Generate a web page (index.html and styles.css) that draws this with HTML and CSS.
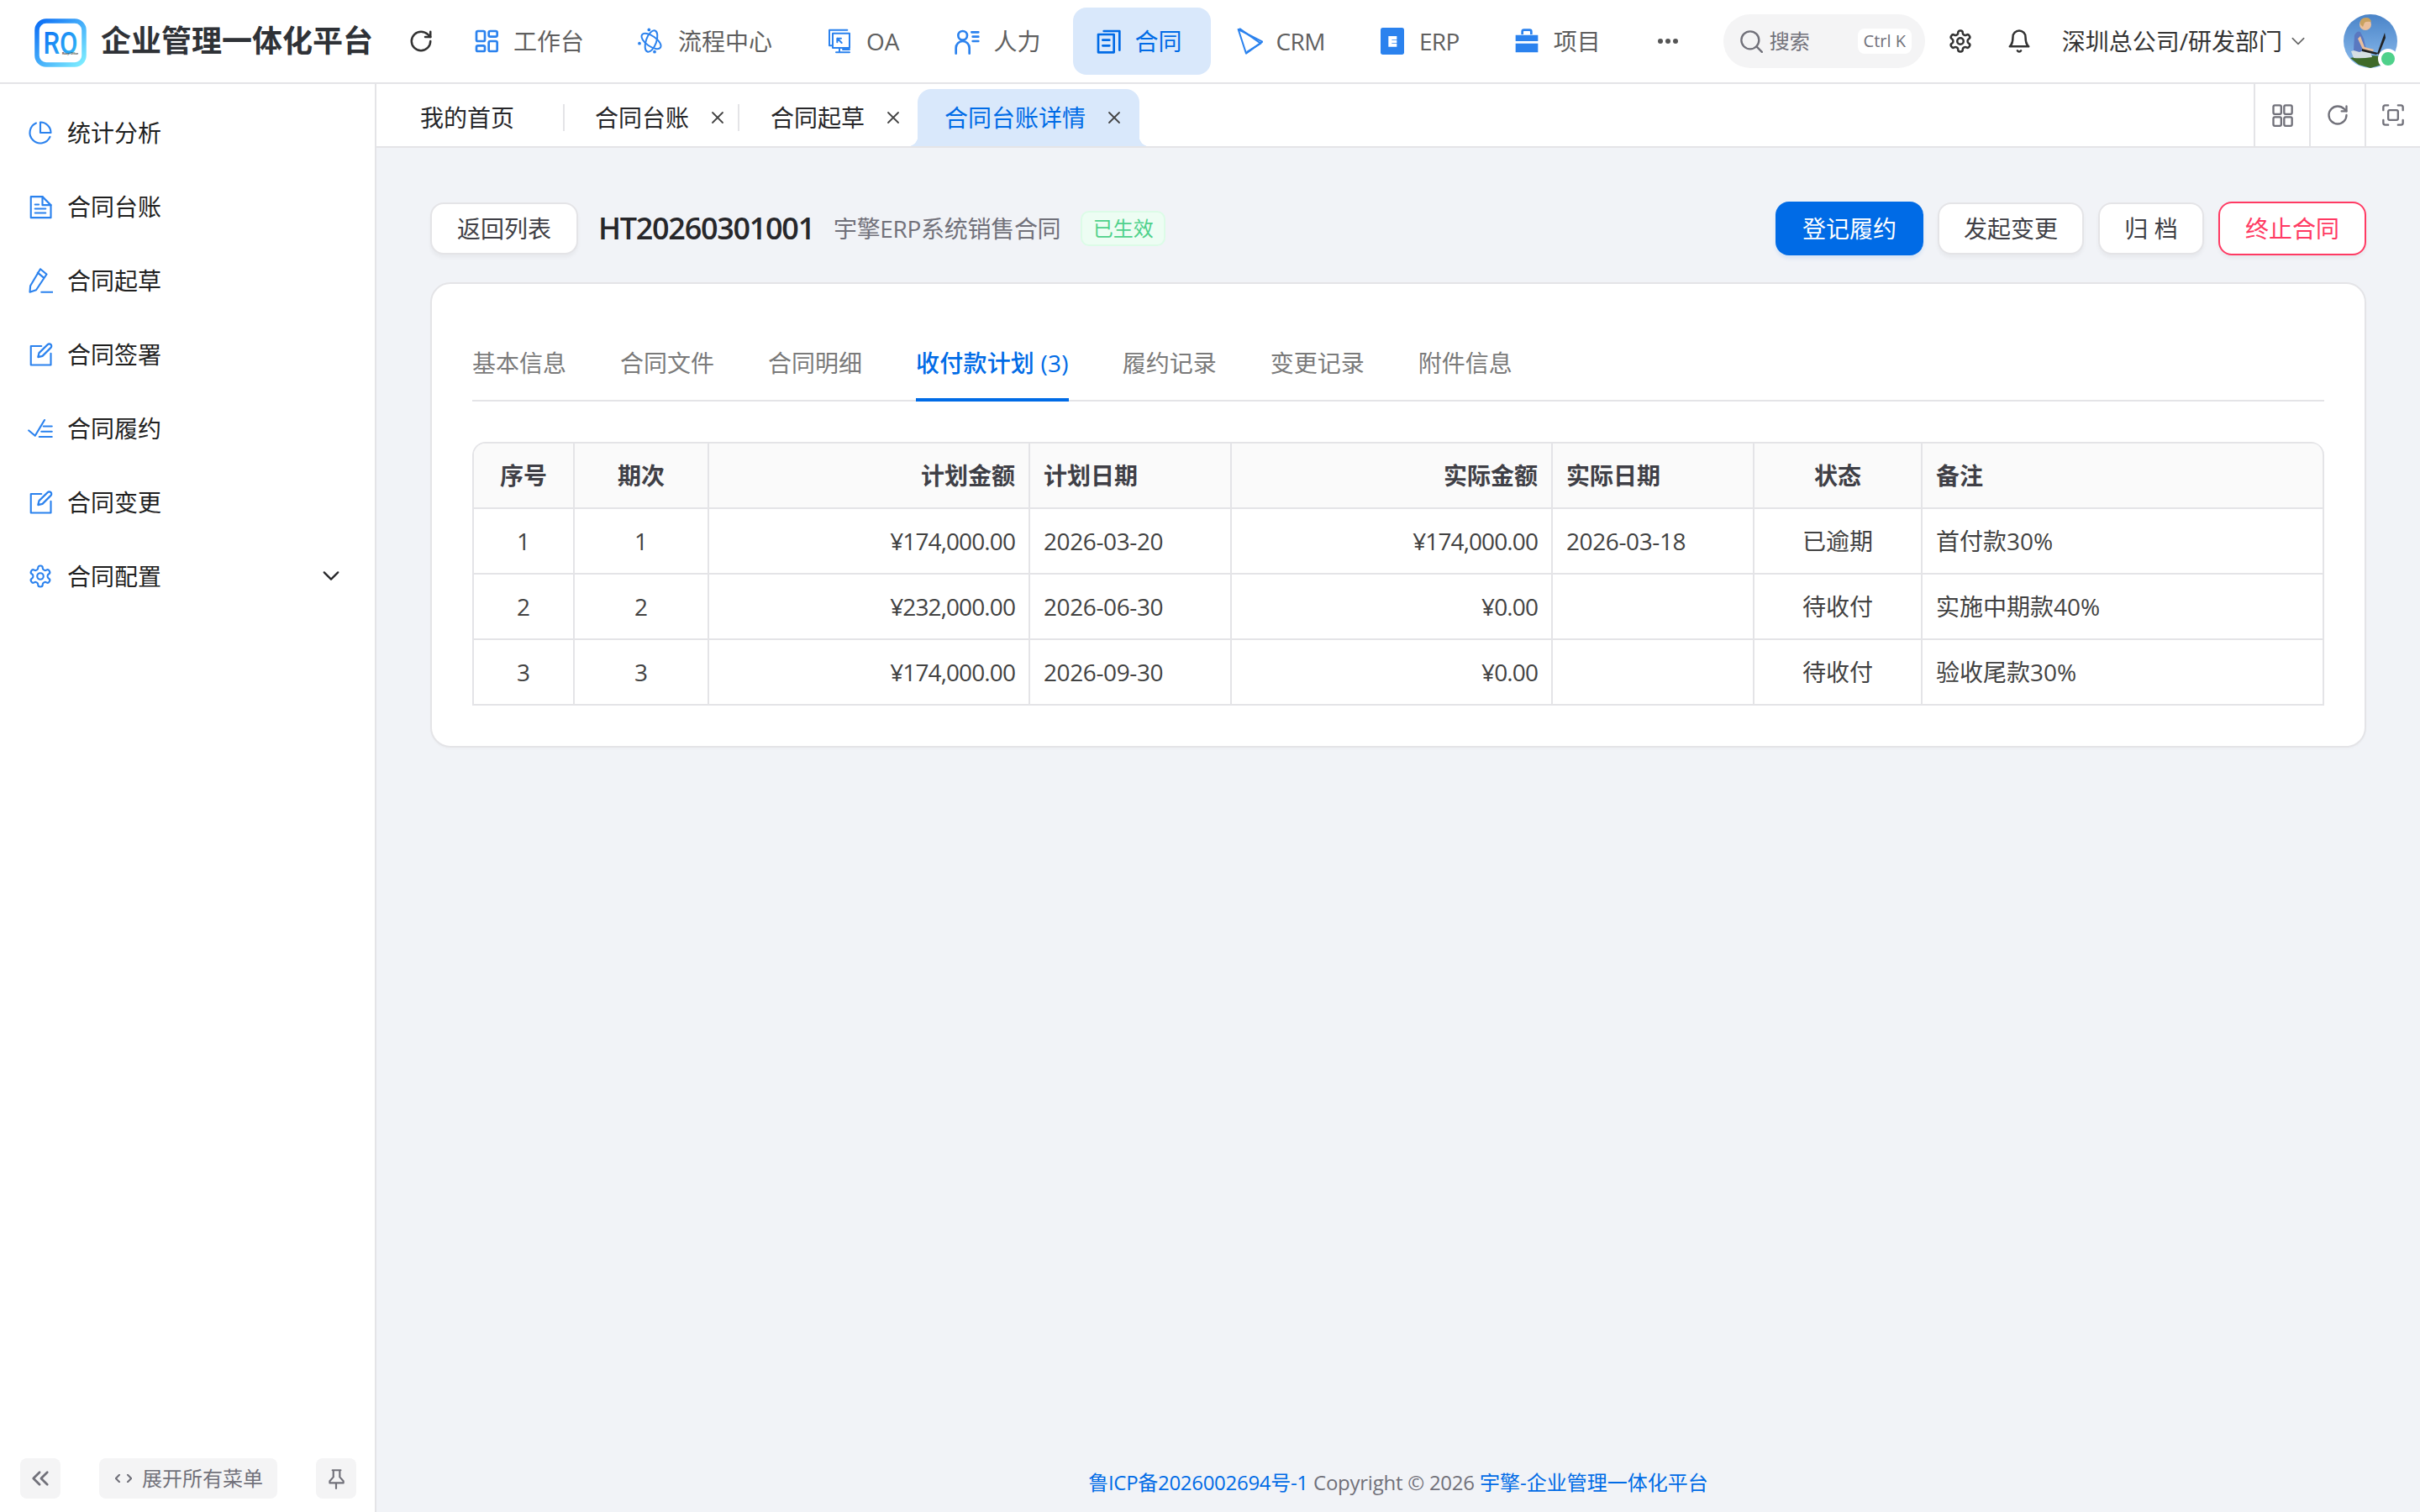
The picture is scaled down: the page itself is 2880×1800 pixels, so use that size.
FILE: index.html
```html
<!DOCTYPE html>
<html lang="zh-CN">
<head>
<meta charset="utf-8">
<title>合同台账详情</title>
<link rel="stylesheet" href="styles.css">
</head>
<body>
<header class="topbar">
  <svg class="logo" viewBox="0 0 62 58">
    <defs><linearGradient id="lg" x1="0" y1="0" x2="1" y2="1"><stop offset="0" stop-color="#0a6cf5"/><stop offset="1" stop-color="#7fefff"/></linearGradient>
    <linearGradient id="lt" x1="0" y1="0" x2="1" y2="1"><stop offset="0" stop-color="#0a6cf5"/><stop offset="1" stop-color="#38c0f5"/></linearGradient></defs>
    <rect x="3" y="3" width="56" height="52" rx="11" fill="#fff" stroke="url(#lg)" stroke-width="5.5"/>
    <text x="10.5" y="41.5" class="logo-ro" fill="url(#lt)" textLength="41" lengthAdjust="spacingAndGlyphs">RO</text>
    <text x="33" y="42.8" class="logo-sub" textLength="19" lengthAdjust="spacingAndGlyphs">Ruoyi Office</text>
  </svg>
  <h1 class="brand">企业管理一体化平台</h1>
  <svg class="ico reload" viewBox="0 0 24 24"><path d="M21 12a9 9 0 1 1-9-9c2.5 0 4.9 1 6.7 2.7L21 8"/><path d="M21 3v5h-5"/></svg>
  <nav class="topnav">
    <a class="navitem"><svg class="ico navico" viewBox="0 0 24 24"><rect x="3" y="3" width="7.5" height="9" rx="1.4"/><rect x="14" y="3" width="7.5" height="5" rx="1.4"/><rect x="14" y="12" width="7.5" height="9" rx="1.4"/><rect x="3" y="16" width="7.5" height="5" rx="1.4"/></svg><span>工作台</span></a>
    <a class="navitem"><svg class="ico navico thin" viewBox="0 0 24 24"><ellipse cx="12" cy="12" rx="10" ry="4.6" transform="rotate(35 12 12)"/><ellipse cx="12" cy="12" rx="10" ry="4.6" transform="rotate(-70 12 12)"/><circle class="dot" cx="10" cy="1.8" r="1.4"/><circle class="dot" cx="1.5" cy="14" r="1.4"/><circle class="dot" cx="15" cy="21.5" r="1.4"/></svg><span>流程中心</span></a>
    <a class="navitem"><svg class="ico navico thin" viewBox="0 0 24 24"><path d="M3 2h16M3 2v14h3"/><path d="M6 5h15v13H6zM10 9.500l4 4M10 13V9.500h3.500"/><path d="M9 22h6M12 18v4M15 19.500h6M15 22h6"/></svg><span>OA</span></a>
    <a class="navitem"><svg class="ico navico" viewBox="0 0 24 24"><circle cx="8" cy="7" r="4"/><path d="M2 23v-5a6 6 0 0 1 12 0v5M16 4h6M17 8h5M17 12h5"/></svg><span>人力</span></a>
    <a class="navitem active"><svg class="ico navico strong" viewBox="0 0 24 24"><path d="M8 3h14v17"/><rect x="3" y="6" width="14" height="16"/><path d="M7 11h6M7 16h6"/></svg><span>合同</span></a>
    <a class="navitem"><svg class="ico navico thin" viewBox="0 0 24 24"><path d="M2 1.500 23.500 12.500 9 23z"/><path d="M3.500 1 22 14 10 21.500"/></svg><span class="latin">CRM</span></a>
    <a class="navitem"><svg class="navico" viewBox="0 0 24 24"><rect x="1.500" width="21" height="24" rx="2" fill="#2b82ee"/><path d="M8.500 7.500h7.500v3h-4.500v.6h4.500v2.500h-4.500v.7h4.500v2.700H8.500z" fill="#fff"/></svg><span class="latin">ERP</span></a>
    <a class="navitem"><svg class="navico" viewBox="0 0 24 24"><path d="M8 6V3.500A1.500 1.500 0 0 1 9.500 2h5A1.500 1.500 0 0 1 16 3.500V6" fill="none" stroke="#2b82ee" stroke-width="2"/><path d="M2 6.500h20V12H2zM2 14h20v8H2z" fill="#2b82ee"/></svg><span>项目</span></a>
    <span class="more"><i></i><i></i><i></i></span>
  </nav>
  <div class="search">
    <svg class="ico gray" viewBox="0 0 24 24"><circle cx="11" cy="11" r="9"/><path d="m23 23-5.500-5.500"/></svg>
    <span class="search-label">搜索</span>
    <kbd class="kbd">Ctrl K</kbd>
  </div>
  <svg class="ico gear" viewBox="0 0 24 24"><path d="M12.220 2h-.44a2 2 0 0 0-2 2v.18a2 2 0 0 1-1 1.730l-.43.25a2 2 0 0 1-2 0l-.15-.08a2 2 0 0 0-2.730.73l-.22.38a2 2 0 0 0 .73 2.730l.15.1a2 2 0 0 1 1 1.720v.51a2 2 0 0 1-1 1.740l-.15.09a2 2 0 0 0-.73 2.730l.22.38a2 2 0 0 0 2.730.73l.15-.08a2 2 0 0 1 2 0l.43.25a2 2 0 0 1 1 1.730V20a2 2 0 0 0 2 2h.44a2 2 0 0 0 2-2v-.18a2 2 0 0 1 1-1.730l.43-.25a2 2 0 0 1 2 0l.15.08a2 2 0 0 0 2.730-.73l.22-.39a2 2 0 0 0-.73-2.730l-.15-.08a2 2 0 0 1-1-1.740v-.5a2 2 0 0 1 1-1.740l.15-.09a2 2 0 0 0 .73-2.730l-.22-.38a2 2 0 0 0-2.730-.73l-.15.08a2 2 0 0 1-2 0l-.43-.25a2 2 0 0 1-1-1.730V4a2 2 0 0 0-2-2z"/><circle cx="12" cy="12" r="3"/></svg>
  <svg class="ico bell" viewBox="0 0 24 24"><path d="M6 8a6 6 0 0 1 12 0c0 7 3 9 3 9H3s3-2 3-9"/><path d="M10.300 21a1.900 1.900 0 0 0 3.400 0"/></svg>
  <span class="org">深圳总公司/研发部门</span>
  <svg class="ico org-chev" viewBox="0 0 24 24"><path d="m4 8 8 8 8-8"/></svg>
  <div class="avatar">
    <svg viewBox="0 0 64 64">
      <defs><linearGradient id="sky" x1="0" y1="0" x2="0" y2="1"><stop offset="0" stop-color="#4a84c8"/><stop offset="1" stop-color="#8cbcee"/></linearGradient></defs>
      <circle cx="32" cy="32" r="32" fill="url(#sky)"/>
      <path d="M8 52q24-6 48 0L46 60 32 64 18 60z" fill="#3f6a2a"/>
      <path d="M9 44q10-4 22-2l3 9q-12 2-22 1z" fill="#d6dfe3"/>
      <path d="M12 43 13 25q3-6 7-4l4 8 3 13-8 3z" fill="#5a78c0"/>
      <circle cx="26" cy="12" r="7" fill="#eabf9c"/>
      <path d="M20 12q-1-8 7-8 5 0 6 5-6-1-8 1l-2 5z" fill="#c9a15f"/>
      <path d="M20 26l5 13 11 3-1 2-12-2-6-13z" fill="#eabf9c"/>
      <path d="M22 41l19 5-2 2-17-4z" fill="#222"/>
      <path d="M49 22 40 47l2 1 8-20z" fill="#222"/>
    </svg>
    <span class="presence"></span>
  </div>
</header>

<div class="body">
  <aside class="sidebar">
    <ul class="sidemenu">
      <li class="sideitem"><svg class="ico sideico" viewBox="0 0 24 24"><path d="M21.200 15.900A10 10 0 1 1 8 2.800"/><path d="M12 2v10h10A10 10 0 0 0 12 2z"/></svg>统计分析</li>
      <li class="sideitem"><svg class="ico sideico" viewBox="0 0 24 24"><path d="M14 2.500H3v20h19V10.500z"/><path d="M14 2.500v8h8M7 10h3.500M7 14h10M7 18h10"/></svg>合同台账</li>
      <li class="sideitem"><svg class="ico sideico" viewBox="0 0 24 24"><path d="M2 23l.5-6L12 1l6 5-10 15zM9.500 4.500l6 5M13 23h11"/></svg>合同起草</li>
      <li class="sideitem"><svg class="ico sideico" viewBox="0 0 24 24"><path d="M13 4H3v18h19V11"/><path d="M19 2.500a2 2 0 0 1 3 3l-8 8-4.200 1 1-4z"/></svg>合同签署</li>
      <li class="sideitem"><svg class="ico sideico" viewBox="0 0 24 24"><path d="m1 14 6 5L16 4M15 10h8M13 15h10M11 20h12"/></svg>合同履约</li>
      <li class="sideitem"><svg class="ico sideico" viewBox="0 0 24 24"><path d="M13 4H3v18h19V11"/><path d="M19 2.500a2 2 0 0 1 3 3l-8 8-4.200 1 1-4z"/></svg>合同变更</li>
      <li class="sideitem"><svg class="ico sideico" viewBox="0 0 24 24"><path d="M12.220 2h-.44a2 2 0 0 0-2 2v.18a2 2 0 0 1-1 1.730l-.43.25a2 2 0 0 1-2 0l-.15-.08a2 2 0 0 0-2.730.73l-.22.38a2 2 0 0 0 .73 2.730l.15.1a2 2 0 0 1 1 1.720v.51a2 2 0 0 1-1 1.740l-.15.09a2 2 0 0 0-.73 2.730l.22.38a2 2 0 0 0 2.730.73l.15-.08a2 2 0 0 1 2 0l.43.25a2 2 0 0 1 1 1.730V20a2 2 0 0 0 2 2h.44a2 2 0 0 0 2-2v-.18a2 2 0 0 1 1-1.730l.43-.25a2 2 0 0 1 2 0l.15.08a2 2 0 0 0 2.730-.73l.22-.39a2 2 0 0 0-.73-2.730l-.15-.08a2 2 0 0 1-1-1.740v-.5a2 2 0 0 1 1-1.740l.15-.09a2 2 0 0 0 .73-2.730l-.22-.38a2 2 0 0 0-2.730-.73l-.15.08a2 2 0 0 1-2 0l-.43-.25a2 2 0 0 1-1-1.730V4a2 2 0 0 0-2-2z"/><circle cx="12" cy="12" r="3"/></svg>合同配置<svg class="ico side-chev" viewBox="0 0 24 24"><path d="m3 7 9 9 9-9"/></svg></li>
    </ul>
    <div class="sidefoot">
      <span class="footbtn"><svg class="ico foot-ico" viewBox="0 0 24 24"><path d="m11 4-8 8 8 8M21 4l-8 8 8 8"/></svg></span>
      <span class="footbtn wide"><svg class="ico code-ico" viewBox="0 0 24 12"><path d="M6 1 1 6l5 5M18 1l5 5-5 5"/></svg>展开所有菜单</span>
      <span class="footbtn"><svg class="ico pin-ico" viewBox="0 0 24 24"><path d="M12 17v6M8 3h9M9 3v7.500L5 15v2h15v-2l-4-4.500V3"/></svg></span>
    </div>
  </aside>

  <main class="main">
    <div class="tabbar">
      <div class="tab first"><span>我的首页</span></div>
      <div class="tab second"><span>合同台账</span><svg class="ico close" viewBox="0 0 16 16"><path d="m2 2 12 12M14 2 2 14"/></svg></div>
      <div class="tab third"><span>合同起草</span><svg class="ico close" viewBox="0 0 16 16"><path d="m2 2 12 12M14 2 2 14"/></svg></div>
      <div class="tab current"><span>合同台账详情</span><svg class="ico close" viewBox="0 0 16 16"><path d="m2 2 12 12M14 2 2 14"/></svg></div>
      <div class="tools">
        <span class="tool"><svg class="ico toolico" viewBox="0 0 24 24"><rect x="3" y="2" width="8" height="9" rx="1.500"/><rect x="14" y="2" width="8" height="9" rx="1.500"/><rect x="3" y="14" width="8" height="9" rx="1.500"/><rect x="14" y="14" width="8" height="9" rx="1.500"/></svg></span>
        <span class="tool"><svg class="ico toolico" viewBox="0 0 24 24"><path d="M21 12a9 9 0 1 1-9-9c2.500 0 4.900 1 6.700 2.700L21 8"/><path d="M21 3v5h-5"/></svg></span>
        <span class="tool"><svg class="ico toolico" viewBox="0 0 24 24"><path d="M7 2H4a2 2 0 0 0-2 2v3M17 2h3a2 2 0 0 1 2 2v3M22 17v3a2 2 0 0 1-2 2h-3M7 22H4a2 2 0 0 1-2-2v-3"/><rect x="7" y="7" width="10" height="10" rx="1.500"/></svg></span>
      </div>
    </div>

    <div class="content">
      <div class="pagehead">
        <button class="btn back">返回列表</button>
        <span class="title">HT20260301001</span>
        <span class="subtitle">宇擎ERP系统销售合同</span>
        <span class="tag">已生效</span>
        <div class="actions">
          <button class="btn primary">登记履约</button>
          <button class="btn">发起变更</button>
          <button class="btn archive">归 档</button>
          <button class="btn danger">终止合同</button>
        </div>
      </div>

      <section class="card">
        <div class="tabs">
          <span class="dtab">基本信息</span>
          <span class="dtab">合同文件</span>
          <span class="dtab">合同明细</span>
          <span class="dtab on">收付款计划 (3)</span>
          <span class="dtab">履约记录</span>
          <span class="dtab">变更记录</span>
          <span class="dtab">附件信息</span>
        </div>
        <table class="grid">
          <colgroup><col class="c1"><col class="c2"><col class="c3"><col class="c4"><col class="c3"><col class="c4"><col class="c7"><col class="c8"></colgroup>
          <thead><tr><th class="mid">序号</th><th class="mid">期次</th><th class="end">计划金额</th><th>计划日期</th><th class="end">实际金额</th><th>实际日期</th><th class="mid">状态</th><th>备注</th></tr></thead>
          <tbody>
            <tr><td class="mid">1</td><td class="mid">1</td><td class="end money">¥174,000.00</td><td class="num">2026-03-20</td><td class="end money">¥174,000.00</td><td class="num">2026-03-18</td><td class="mid">已逾期</td><td>首付款30%</td></tr>
            <tr><td class="mid">2</td><td class="mid">2</td><td class="end money">¥232,000.00</td><td class="num">2026-06-30</td><td class="end money">¥0.00</td><td></td><td class="mid">待收付</td><td>实施中期款40%</td></tr>
            <tr><td class="mid">3</td><td class="mid">3</td><td class="end money">¥174,000.00</td><td class="num">2026-09-30</td><td class="end money">¥0.00</td><td></td><td class="mid">待收付</td><td>验收尾款30%</td></tr>
          </tbody>
        </table>
      </section>
    </div>

    <footer class="foot"><a class="icp">鲁ICP备2026002694号-1</a> <span class="copy">Copyright © 2026</span> <a>宇擎-企业管理一体化平台</a></footer>
  </main>
</div>
</body>
</html>
```
FILE: styles.css
```css
* { box-sizing: border-box; }
html, body { margin: 0; height: 100%; }
body {
  width: 2880px;
  height: 1800px;
  overflow: hidden;
  display: flex;
  flex-direction: column;
  background: #fff;
  color: #27272a;
  font-family: "Open Sans", "Noto Sans CJK SC", sans-serif;
  font-size: 28px;
  line-height: 40px;
}
ul { list-style: none; margin: 0; padding: 0; }
.ico { fill: none; stroke: currentColor; stroke-width: 2; stroke-linecap: round; stroke-linejoin: round; flex: none; }

/* top bar */
.topbar {
  flex: none;
  height: 100px;
  display: flex;
  align-items: center;
  border-bottom: 2px solid #e4e4e7;
  padding-left: 41px;
}
.logo { width: 62px; height: 58px; flex: none; margin-top: 3px; }
.logo-ro { font: 500 36px "Roboto", sans-serif; }
.logo-sub { font: 700 4px "Liberation Sans", sans-serif; fill: #333; }
.brand { margin: 0 0 0 17px; font-size: 36px; line-height: 50px; font-weight: 700; color: #2f3237; white-space: nowrap; }
.reload { width: 30px; height: 30px; margin-left: 42px; color: #333; }
.topnav { display: flex; align-items: center; gap: 4px; margin-left: 21px; height: 80px; }
.navitem { display: flex; align-items: center; height: 80px; padding: 0 34px 0 26px; border-radius: 16px; color: #5f5f5f; white-space: nowrap; }
.navitem .latin { letter-spacing: -.6px; }
.navico { width: 32px; height: 32px; margin-right: 16px; color: #2b82ee; flex: none; }
.navico.thin { stroke-width: 1.500; }
.navico .dot { fill: currentColor; stroke: none; }
.navitem.active { background: #d9e8fb; color: #006be6; }
.navitem.active .navico { color: #006be6; }
.more { display: flex; gap: 3px; margin-left: 30px; }
.more i { width: 6px; height: 6px; border-radius: 50%; background: #555; }
.search {
  display: flex; align-items: center; width: 240px; height: 64px; margin-left: 54px;
  padding: 0 16px 0 19px; border-radius: 32px; background: #f4f4f5; color: #71717a; flex: none;
}
.search .ico { width: 28px; height: 28px; }
.search-label { font-size: 24px; margin-left: 8px; }
.kbd { margin-left: auto; width: 64px; height: 30px; border-radius: 8px; background: #fff; font: 20px/30px "Open Sans", sans-serif; text-align: center; color: #71717a; }
.gear { width: 30px; height: 30px; margin-left: 27px; color: #333; }
.bell { width: 30px; height: 30px; margin-left: 40px; color: #333; }
.org { margin-left: 36px; color: #333; white-space: nowrap; }
.org-chev { width: 20px; height: 20px; margin-left: 9px; color: #666; stroke-width: 2; }
.avatar { position: relative; width: 64px; height: 64px; margin-left: 44px; flex: none; }
.avatar svg { display: block; width: 64px; height: 64px; }
.presence { position: absolute; left: 41px; top: 41px; width: 24px; height: 24px; border-radius: 50%; background: #4fd18b; border: 4px solid #fff; }

/* body */
.body { flex: 1; display: flex; min-height: 0; }
.sidebar { flex: none; width: 448px; border-right: 2px solid #e4e4e7; display: flex; flex-direction: column; background: #fff; }
.sidemenu { flex: 1; padding-top: 14px; }
.sideitem { display: flex; align-items: center; height: 88px; padding-left: 33px; color: #1f1f1f; position: relative; }
.sideico { width: 30px; height: 30px; margin-right: 17px; color: #2b82ee; stroke-width: 1.700; }
.side-chev { width: 22px; height: 22px; margin-left: auto; margin-right: 41px; stroke-width: 2.500; color: #27272a; }
.sidefoot { display: flex; align-items: center; justify-content: space-between; height: 64px; padding: 0 22px 16px 24px; flex: none; }
.footbtn { display: flex; align-items: center; justify-content: center; width: 48px; height: 48px; border-radius: 8px; background: #f4f4f5; color: #71717a; font-size: 24px; }
.footbtn.wide { width: 212px; padding-left: 2px; }
.foot-ico { width: 22px; height: 22px; stroke-width: 3; }
.code-ico { width: 20px; height: 10px; margin-right: 12px; stroke-width: 2.500; }
.pin-ico { width: 26px; height: 26px; }

/* main */
.main { flex: 1; min-width: 0; display: flex; flex-direction: column; background: #f1f3f7; }
.tabbar { flex: none; height: 76px; display: flex; align-items: flex-end; background: #fff; border-bottom: 2px solid #e4e4e7; position: relative; }
.tab { position: relative; display: flex; align-items: center; height: 68px; color: #27272a; }
.tab .close { width: 16px; height: 16px; color: #444; stroke-width: 1.800; margin-left: 26px; }
.tab.first { width: 224px; padding-left: 52px; }
.tab.second { width: 208px; padding-left: 36px; }
.tab.third { width: 212px; padding-left: 37px; }
.tab.first::after, .tab.second::after { content: ""; position: absolute; right: 0; top: 18px; width: 2px; height: 32px; background: #e4e4e7; }
.tab.current { width: 264px; padding-left: 32px; background: #d9e8fb; color: #006be6; border-radius: 16px 16px 0 0; }
.tab.current::before, .tab.current::after { content: ""; position: absolute; bottom: 0; width: 12px; height: 12px; }
.tab.current::before { left: -12px; background: radial-gradient(circle at 0 0, transparent 12px, #d9e8fb 12.500px); }
.tab.current::after { right: -12px; background: radial-gradient(circle at 100% 0, transparent 12px, #d9e8fb 12.500px); }
.tools { display: flex; margin-left: auto; height: 74px; align-self: flex-start; }
.tool { width: 66px; display: flex; align-items: center; justify-content: center; border-left: 2px solid #e4e4e7; color: #71717a; }
.toolico { width: 28px; height: 28px; stroke-width: 2; }

.content { flex: 1; padding: 64px 64px 0; }
.pagehead { display: flex; align-items: center; height: 64px; }
.btn {
  height: 62px; padding: 0 29px; border: 2px solid #e4e4e7; border-radius: 16px; background: #fff;
  font: inherit; color: #3f3f46; box-shadow: 0 4px 4px rgba(0,0,0,.04); white-space: nowrap;
}
.btn.back { padding: 0 30px; }
.btn.primary { height: 64px; width: 176px; border: 0; background: #006be6; color: #fff; box-shadow: 0 4px 4px rgba(0,107,230,.1); }
.btn.danger { height: 64px; width: 176px; padding: 0; border-color: #ff3a63; color: #ff3a63; }
.btn.archive { width: 126px; padding: 0; }
.title { margin-left: 24px; font-size: 36px; font-weight: 600; color: #27272a; white-space: nowrap; letter-spacing: -1.300px; }
.subtitle { margin-left: 23px; color: #71717a; white-space: nowrap; letter-spacing: -.3px; }
.tag { margin-left: 24px; height: 42px; width: 101px; text-align: center; border: 2px solid #dcfce7; border-radius: 10px; background: #edfdf3; color: #4fd18b; font-size: 24px; line-height: 38px; }
.actions { margin-left: auto; display: flex; align-items: center; gap: 17px; }

.card { margin-top: 32px; background: #fff; border: 2px solid #e4e4e7; border-radius: 24px; padding: 48px; box-shadow: 0 2px 2px rgba(0,0,0,.02); }
.tabs { display: flex; gap: 64px; padding-top: 26px; border-bottom: 2px solid #e4e4e7; }
.dtab { height: 66px; color: #7a7a7a; margin-bottom: -2px; white-space: nowrap; }
.dtab.on { color: #006be6; font-weight: 500; border-bottom: 4px solid #006be6; letter-spacing: .2px; }

.grid { width: 2204px; margin-top: 48px; table-layout: fixed; border-collapse: separate; border-spacing: 0; border-top: 2px solid #e4e4e7; border-left: 2px solid #e4e4e7; border-top-left-radius: 16px; border-top-right-radius: 16px; color: #424242; }
.c1 { width: 120px; } .c2 { width: 160px; } .c3 { width: 382px; } .c4 { width: 240px; } .c7 { width: 200px; } .c8 { width: 478px; }
.grid th, .grid td { height: 78px; padding: 0 16px; border-right: 2px solid #e4e4e7; border-bottom: 2px solid #e4e4e7; text-align: left; white-space: nowrap; }
.grid th { background: #fafafa; font-weight: 700; color: #3f3f46; }
.grid th:first-child { border-top-left-radius: 14px; }
.grid th:last-child { border-top-right-radius: 14px; }
.grid .mid { text-align: center; padding: 0; }
.grid .end { text-align: right; }
.num { letter-spacing: -.4px; }
.money { letter-spacing: -.9px; }

.foot { flex: none; height: 70px; text-align: center; font-size: 24px; line-height: 70px; color: #71717a; }
.foot a { color: #006be6; }
.foot .icp { letter-spacing: -.3px; }
.foot .copy { letter-spacing: -.25px; }
```
